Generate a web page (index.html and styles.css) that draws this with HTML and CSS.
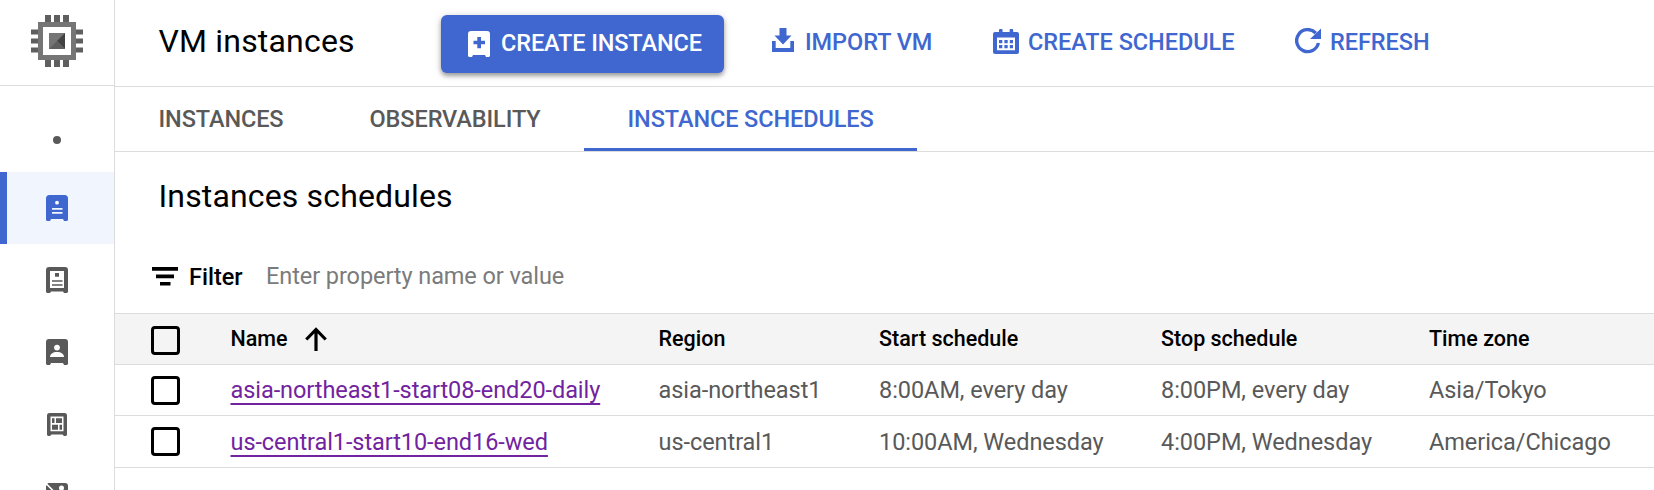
FILE: index.html
```html
<!DOCTYPE html>
<html lang="en">
<head>
<meta charset="utf-8">
<title>VM instances</title>
<link rel="stylesheet" href="styles.css">
</head>
<body>
<div class="app">
  <nav class="sidebar">
    <div class="product">
      <svg width="54" height="54" viewBox="0 0 54 54">
        <g fill="#5f5f5f">
          <path d="M15 1h6v8h-6zM24 1h6v8h-6zM33 1h6v8h-6zM15 45h6v8h-6zM24 45h6v8h-6zM33 45h6v8h-6z"/>
          <path d="M1 15.500h8v5h-8zM1 24.500h8v5h-8zM1 33.500h8v5h-8zM45 15.500h8v5h-8zM45 24.500h8v5h-8zM45 33.500h8v5h-8z"/>
        </g>
        <path fill="#757575" fill-rule="evenodd" d="M8 8h38v38H8zM13 13v28h28V13z"/>
        <path fill="#757575" d="M19 19h16v16H19z"/>
        <path fill="#424242" d="M35 19v16l-8-8z"/>
        <path fill="#5f5f5f" d="M19 35l8-8 8 8z"/>
      </svg>
    </div>
    <div class="section"><span class="dot"></span></div>
    <a class="item active">
      <svg width="22" height="26" viewBox="0 0 22 26"><path fill="#4067d0" d="M3.500 0h15A3.500 3.500 0 0 1 22 3.500V25l-1 1h-3l-1-2H5l-1 2H1l-1-1V3.500A3.500 3.500 0 0 1 3.500 0z"/><circle cx="11" cy="7.700" r="1.900" fill="#fff"/><path fill="#f0f5fe" d="M6 13h10.500v1.700H6zM6 17h10.500v1.700H6z"/></svg>
    </a>
    <a class="item">
      <svg width="22" height="26" viewBox="0 0 22 26"><path fill="#595959" fill-rule="evenodd" d="M3 0h16a3 3 0 0 1 3 3v22l-1 1h-3l-1-1.500H5L4 26H1l-1-1V3a3 3 0 0 1 3-3zM4 4v17h14V4z"/><path fill="#595959" d="M9 6h4v3.700H9zM6 13.300h10.500v1.500H6zM6 17.300h10.500v1.500H6z"/></svg>
    </a>
    <a class="item">
      <svg width="22" height="26" viewBox="0 0 22 26"><path fill="#595959" d="M3 0h16a3 3 0 0 1 3 3v22l-1 1h-3l-1-2H5l-1 2H1l-1-1V3a3 3 0 0 1 3-3z"/><circle cx="11" cy="8.600" r="2.900" fill="#fff"/><path fill="#fff" d="M4 18c0-3 3-5 7-5s7 2 7 5z"/></svg>
    </a>
    <a class="item">
      <svg width="20" height="23" viewBox="0 0 20 23"><path fill="#595959" fill-rule="evenodd" d="M2.500 0h15A2.500 2.500 0 0 1 20 2.500V22l-1 1h-2l-1.500-1.500h-11L3 23H1l-1-1V2.500A2.500 2.500 0 0 1 2.500 0zM3.500 3.500v14.700h13V3.500z"/><path fill="#595959" d="M5 5.300h2.500V10H5zM9 5.300h6V10H9zM5 11.700h6v5H5zM12.500 11.700H15v5h-2.500z"/></svg>
    </a>
    <a class="item">
      <svg width="22" height="26" viewBox="0 0 22 26"><path fill="#595959" d="M2 0h17a3 3 0 0 1 3 3v22H0V3z"/><circle cx="15.500" cy="5" r="2.500" fill="#fff"/><path stroke="#fff" stroke-width="2.200" d="M-1 0l24 24"/><path stroke="#595959" stroke-width="1.800" d="M0 3l22 22"/></svg>
    </a>
  </nav>
  <main class="content">
    <header class="toolbar">
      <h1 class="title">VM instances</h1>
      <button class="btn primary">
        <svg width="22" height="26" viewBox="0 0 22 26"><path fill="#fff" d="M3 0h16a3 3 0 0 1 3 3v22l-1 1h-3l-1-2H5l-1 2H1l-1-1V3a3 3 0 0 1 3-3z"/><path fill="#4067d0" d="M9.300 6h3.700v3.800h4v3.500h-4v4H9.300v-4H5.500V9.800h3.800z"/></svg>
        <span class="label">CREATE INSTANCE</span>
      </button>
      <button class="btn import">
        <svg width="22" height="24" viewBox="0 0 22 24"><path fill="#4067d0" d="M7.500 0h7v7.500h5L11 16.500 2.500 7.500h5zM0 13h3.700v7h14.600v-7H22v11H0z"/></svg>
        <span class="label">IMPORT VM</span>
      </button>
      <button class="btn schedule">
        <svg width="26" height="25" viewBox="0 0 26 25"><path fill="#4067d0" fill-rule="evenodd" d="M6 1.500a1.800 1.800 0 0 1 3.600 0V3h7V1.500a1.800 1.800 0 0 1 3.600 0V3H24a2 2 0 0 1 2 2v18a2 2 0 0 1-2 2H2a2 2 0 0 1-2-2V5a2 2 0 0 1 2-2h4zM4 8.500v12.700h18V8.500z"/><path fill="#4067d0" d="M6 11h3.300v3.200H6zM11.400 11h3.300v3.200h-3.300zM16.800 11H20v3.200h-3.200zM6 16h3.300v3.200H6zM11.400 16h3.300v3.200h-3.300zM16.800 16H20v3.200h-3.200z"/></svg>
        <span class="label">CREATE SCHEDULE</span>
      </button>
      <button class="btn refresh">
        <svg width="26" height="26" viewBox="0 0 26 26"><path fill="none" stroke="#4067d0" stroke-width="3.400" d="M20.800 5.200A11 11 0 1 0 23.400 15"/><path fill="#4067d0" d="M26 .5V11H15z"/></svg>
        <span class="label">REFRESH</span>
      </button>
    </header>
    <div class="tabs">
      <a class="tab t1">INSTANCES</a>
      <a class="tab t2">OBSERVABILITY</a>
      <a class="tab t3 selected">INSTANCE SCHEDULES</a>
    </div>
    <h2 class="subtitle">Instances schedules</h2>
    <div class="filter">
      <svg width="26" height="19" viewBox="0 0 26 19"><path d="M0 0h26v3.700H0zM4 7.500h18v3.700H4zM8 15h10.500v3.500H8z"/></svg>
      <span class="filter-label">Filter</span>
      <span class="placeholder">Enter property name or value</span>
    </div>
    <div class="table">
      <div class="row head">
        <span class="check"></span>
        <span class="cell name">Name
          <svg width="22" height="24" viewBox="0 0 22 24"><path fill="none" stroke="#000" stroke-width="3.200" d="M11 24V3M1.300 12.500L11 2.500l9.700 10"/></svg>
        </span>
        <span class="cell">Region</span><span class="cell">Start schedule</span><span class="cell">Stop schedule</span><span class="cell">Time zone</span>
      </div>
      <div class="row r1">
        <span class="check"></span>
        <span class="cell"><a class="link">asia-northeast1-start08-end20-daily</a></span>
        <span class="cell">asia-northeast1</span><span class="cell">8:00AM, every day</span><span class="cell">8:00PM, every day</span><span class="cell">Asia/Tokyo</span>
      </div>
      <div class="row r2">
        <span class="check"></span>
        <span class="cell"><a class="link">us-central1-start10-end16-wed</a></span>
        <span class="cell">us-central1</span><span class="cell">10:00AM, Wednesday</span><span class="cell">4:00PM, Wednesday</span><span class="cell">America/Chicago</span>
      </div>
    </div>
  </main>
</div>
</body>
</html>
```
FILE: styles.css
```css
* { box-sizing: border-box; }
body { margin: 0; background: #fff; font-family: Roboto, "Liberation Sans", sans-serif; color: #000; }
svg { display: block; flex: none; }
.app { display: flex; height: 490px; overflow: hidden; }
.sidebar { flex: none; width: 115px; border-right: 1px solid #dcdcdc; }
.product { height: 86px; padding: 14px 0 0 30px; border-bottom: 1px solid #dcdcdc; }
.section { height: 86px; padding: 50px 0 0 53px; }
.dot { display: block; width: 8px; height: 8px; border-radius: 50%; background: #595959; }
.item { display: flex; align-items: center; justify-content: center; height: 72px; }
.item.active { background: #f0f5fe; border-left: 7px solid #4067d0; padding-right: 7px; }
.content { flex: 1; min-width: 0; }
.toolbar { display: flex; height: 87px; padding: 15px 0 0 43.5px; border-bottom: 1px solid #dcdcdc; white-space: nowrap; }
.title { flex: none; width: 282.5px; margin: 0; font-size: 32px; line-height: 52px; font-weight: 400; letter-spacing: .19px; }
.btn { flex: none; display: flex; align-items: center; height: 52px; padding: 0; border: 0; background: none; color: #4067d0; font: 500 23.5px/50px Roboto, sans-serif; letter-spacing: -.05px; white-space: nowrap; }
.btn .label { padding-top: 2px; }
.btn.primary { width: 283px; height: 58px; padding: 0 0 0 27px; gap: 11px; border-radius: 6px; background: #4067d0; color: #fff; letter-spacing: -.12px; box-shadow: 0 3px 4px rgba(0,0,0,.32), 0 1px 8px rgba(0,0,0,.15); }
.btn.primary .label { padding: 0 0 2px; }
.import { width: 221px; padding-left: 48px; gap: 11px; }
.import svg { margin-top: -2px; }
.schedule { width: 302px; padding-left: 48px; gap: 9px; }
.refresh { padding-left: 48px; gap: 9px; }
.tabs { display: flex; height: 65px; border-bottom: 1px solid #dcdcdc; font-size: 23.5px; font-weight: 500; line-height: 64px; letter-spacing: -.1px; color: #595959; }
.tab { padding-left: 43.5px; white-space: nowrap; }
.t1 { width: 211px; }
.t2 { width: 258px; }
.t3 { width: 333px; }
.selected { color: #4067d0; border-bottom: 3px solid #4067d0; }
.subtitle { margin: 0; height: 93px; padding-left: 43.5px; font-size: 32px; font-weight: 400; line-height: 89px; letter-spacing: .15px; }
.filter { display: flex; align-items: center; height: 68px; padding: 0 0 5px 37px; font-size: 23.5px; }
.filter-label { width: 77px; margin-left: 11px; font-weight: 500; }
.placeholder { padding-bottom: 2px; color: #7b7b7b; letter-spacing: -.08px; }
.table { border-top: 1px solid #dcdcdc; }
.row { display: grid; grid-template-columns: 79.500px 428px 220.500px 282px 268px 1fr; height: 51px; padding-left: 36px; border-bottom: 1px solid #dcdcdc; color: #595959; font-size: 23.5px; line-height: 50px; letter-spacing: -.05px; white-space: nowrap; }
.r2 { height: 52px; line-height: 52px; }
.head { background: #f4f4f4; color: #000; font-size: 21.5px; font-weight: 500; letter-spacing: 0; }
.name { display: flex; align-items: center; gap: 17px; }
.check { width: 29px; height: 29px; margin-top: 11px; border: 3px solid #000; border-radius: 4px; background: #fff; }
.head .check { margin-top: 12px; background: none; }
.link { color: #7123a0; letter-spacing: -.07px; text-decoration: underline; text-decoration-thickness: 2px; text-underline-offset: 5px; text-decoration-skip-ink: none; }
```
